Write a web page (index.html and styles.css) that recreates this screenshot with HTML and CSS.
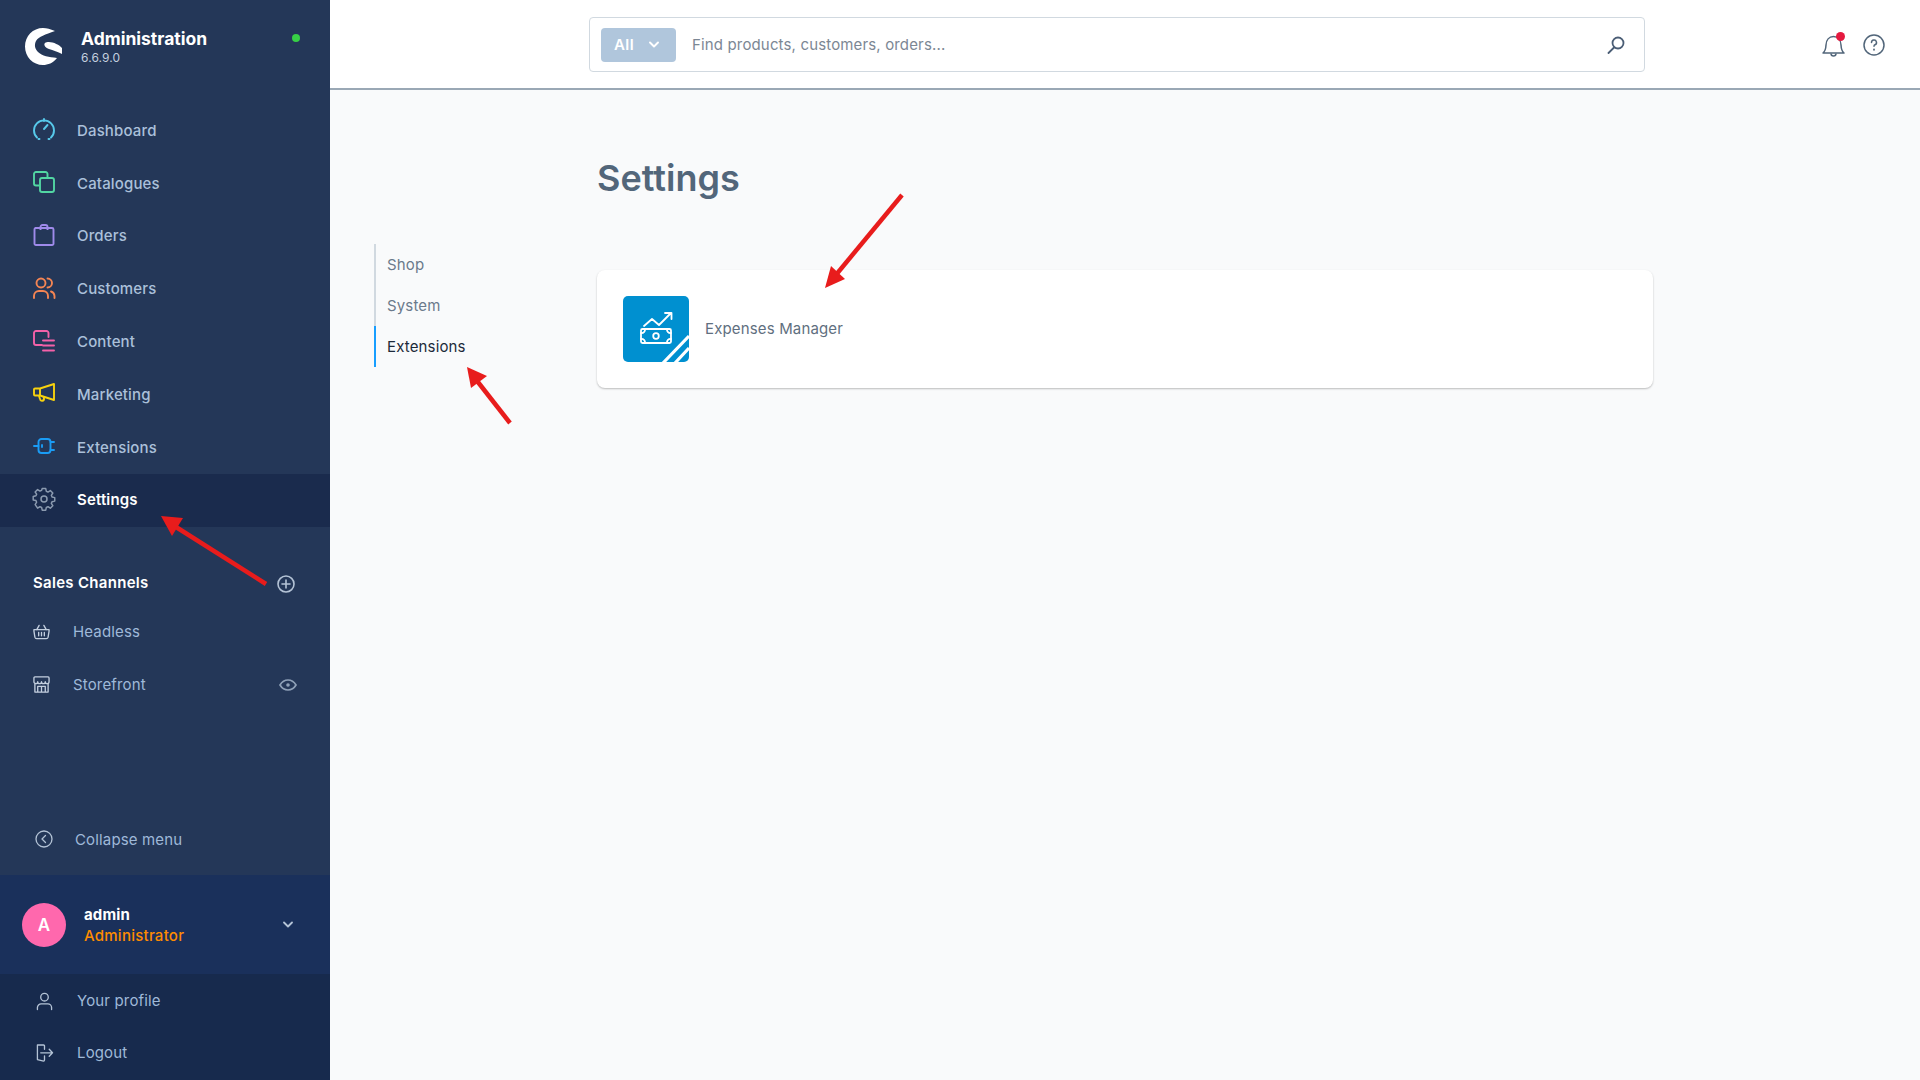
FILE: index.html
```html
<!DOCTYPE html>
<html lang="en">
<head>
<meta charset="utf-8">
<title>Settings</title>
<link rel="stylesheet" href="styles.css">
</head>
<body>
<aside class="sidebar">
  <header class="brand">
    <svg class="logo" width="37" height="37" viewBox="0 0 37 37"><path fill="#fff" fill-rule="evenodd" d="M30 3C25 1 22 0 18 0 8 0 0 8 0 18.500 0 29 8 37 18 37c5 0 10-2 14-7-8-1-15-2-19-6-3-3-4-7-2-11 3-5 9-6 19-10Z"/><path fill="#fff" d="M20 15c4-3 14 1 17 5v6c-4-2-9-4-13-5-3-1-6-4-4-6Z"/></svg>
    <div class="brand-text">
      <div class="brand-name">Administration</div>
      <div class="brand-version">6.6.9.0</div>
    </div>
    <span class="status-dot"></span>
  </header>
  <nav class="main-nav">
    <a class="nav-row"><svg class="nav-icon" viewBox="0 0 22 22" fill="none" stroke="#57c9ea" stroke-width="1.900" stroke-linecap="round"><path d="M4 19.500a10 10 0 1 1 14 0"/><path d="M11 1v2M11 11l3.500-4"/><path d="M5.500 21h1M15.500 21h1"/></svg><span>Dashboard</span></a>
    <a class="nav-row"><svg class="nav-icon" viewBox="0 0 22 22" fill="none" stroke="#52d6a3" stroke-width="1.900" stroke-linejoin="round"><path d="M14.500 6V3a2 2 0 0 0-2-2H3a2 2 0 0 0-2 2v9.500a2 2 0 0 0 2 2h3"/><rect x="7" y="7" width="14" height="14" rx="2"/></svg><span>Catalogues</span></a>
    <a class="nav-row"><svg class="nav-icon" viewBox="0 0 22 22" fill="none" stroke="#9f8aea" stroke-width="1.900" stroke-linejoin="round"><path d="M2.500 4H19a1.500 1.500 0 0 1 1.500 1.500V20a1.500 1.500 0 0 1-1.500 1H3a1.500 1.500 0 0 1-1.500-1V5.500A1.500 1.500 0 0 1 2.500 4Z"/><path d="M7.500 6V3a2 2 0 0 1 2-2h3a2 2 0 0 1 2 2v3"/></svg><span>Orders</span></a>
    <a class="nav-row"><svg class="nav-icon" viewBox="0 0 22 22" fill="none" stroke="#f58553" stroke-width="1.900" stroke-linecap="round"><circle cx="8" cy="6" r="4.500"/><path d="M1 21v-2a5 5 0 0 1 5-5h4a5 5 0 0 1 5 5v2M14.500 1.500a4.500 4.500 0 0 1 0 9M18 14.500a5 5 0 0 1 3.500 4.500v2"/></svg><span>Customers</span></a>
    <a class="nav-row"><svg class="nav-icon" viewBox="0 0 22 22" fill="none" stroke="#f461a8" stroke-width="1.900" stroke-linecap="round" stroke-linejoin="round"><path d="M15.500 7V3a2 2 0 0 0-2-2H3a2 2 0 0 0-2 2v10a2 2 0 0 0 2 2h6"/><path d="M10 10.500h11M10 15.500h11M10 20.500h11"/></svg><span>Content</span></a>
    <a class="nav-row"><svg class="nav-icon" viewBox="0 0 22 22" fill="none" stroke="#f8d20e" stroke-width="1.900" stroke-linejoin="round"><path d="M21 2 7 6.500H2a1 1 0 0 0-1 1v5a1 1 0 0 0 1 1h5L21 18Z"/><path d="M7 6.500v7M6 14l1 3a2 2 0 0 0 4-.5l-.5-1.500"/></svg><span>Marketing</span></a>
    <a class="nav-row"><svg class="nav-icon" viewBox="0 0 22 22" fill="none" stroke="#1a9cf5" stroke-width="1.900" stroke-linecap="round"><rect x="5.500" y="4" width="12" height="14" rx="3"/><path d="M1 11h4.500M17.500 7H21M17.500 15H21"/><path d="M9 10v2"/></svg><span>Extensions</span></a>
    <a class="nav-row is-active"><svg class="nav-icon" viewBox="0 0 22 22" fill="none" stroke="#8c9bb0" stroke-width="1.500" stroke-linejoin="round"><circle cx="11" cy="11" r="3"/><path d="M9.200 1h3.600l.6 2.800 1.700.7 2.400-1.500 2.500 2.500-1.500 2.400.7 1.700 2.800.6v3.600l-2.800.6-.7 1.700 1.500 2.400-2.500 2.500-2.400-1.500-1.700.7-.6 2.800H9.200l-.6-2.800-1.700-.7-2.400 1.500L2 17.300l1.500-2.400-.7-1.700L0 12.600V9l2.800-.6.7-1.700L2 4.500 4.500 2l2.400 1.500 1.700-.7Z" transform="translate(.2 -.4) scale(.98)"/></svg><span>Settings</span></a>
  </nav>
  <section class="channels">
    <div class="channels-head">
      <span>Sales Channels</span>
      <svg class="side-action" width="18" height="18" viewBox="0 0 18 18" fill="none" stroke="#b4c3d6" stroke-width="1.600" stroke-linecap="round"><circle cx="9" cy="9" r="8"/><path d="M9 5v8M5 9h8"/></svg>
    </div>
    <a class="channel-row"><svg class="channel-icon" viewBox="0 0 18 18" fill="none" stroke="#c3cfdf" stroke-width="1.400" stroke-linejoin="round" stroke-linecap="round"><path d="M1 7h16v1.500l-1 6.500a2 2 0 0 1-2 1.500H4a2 2 0 0 1-2-1.500L1 8.500Z"/><path d="M4 7l2.500-4.500M14 7l-2.500-4.500M6 10v3.500M9 10v3.500M12 10v3.500"/></svg><span>Headless</span></a>
    <a class="channel-row"><svg class="channel-icon" viewBox="0 0 18 18" fill="none" stroke="#c3cfdf" stroke-width="1.400" stroke-linejoin="round"><path d="M2 1h14a1 1 0 0 1 1 1v4a2 2 0 0 1-4 0 2 2 0 0 1-4 0 2 2 0 0 1-4 0 2 2 0 0 1-4 0V2a1 1 0 0 1 1-1ZM2 8v9h14V8M5 17v-6h8v6M9 11v6"/></svg><span>Storefront</span><svg class="eye" width="18" height="12" viewBox="0 0 18 12" fill="none" stroke="#8fa1b8" stroke-width="1.700"><path d="M1 6c2-3.300 4.800-5 8-5s6 1.700 8 5c-2 3.300-4.800 5-8 5S3 9.300 1 6Z"/><circle cx="9" cy="6" r="1.800" fill="#8fa1b8" stroke="none"/></svg></a>
  </section>
  <a class="collapse-row"><svg width="18" height="18" viewBox="0 0 18 18" fill="none" stroke="#b4c3d6" stroke-width="1.300" stroke-linecap="round" stroke-linejoin="round"><circle cx="9" cy="9" r="8"/><path d="M10.500 5.500 7 9l3.500 3.500"/></svg><span>Collapse menu</span></a>
  <div class="user-block">
    <span class="avatar">A</span>
    <div class="user-text">
      <div class="user-name">admin</div>
      <div class="user-role">Administrator</div>
    </div>
    <svg class="user-chevron" width="10" height="7" viewBox="0 0 10 7" fill="none" stroke="#b4c3d6" stroke-width="1.800" stroke-linecap="round" stroke-linejoin="round"><path d="m1 1.500 4 4 4-4"/></svg>
  </div>
  <div class="user-menu">
    <a class="user-menu-row"><svg class="menu-icon" viewBox="0 0 18 18" fill="none" stroke="#b4c3d6" stroke-width="1.400" stroke-linecap="round"><circle cx="9" cy="5" r="4"/><path d="M1.500 18v-2a4 4 0 0 1 4-4h7a4 4 0 0 1 4 4v2"/></svg><span>Your profile</span></a>
    <a class="user-menu-row"><svg class="menu-icon" viewBox="0 0 18 18" fill="none" stroke="#b4c3d6" stroke-width="1.400" stroke-linecap="round" stroke-linejoin="round"><path d="M9 5V1.500a1 1 0 0 0-1-1H1.500v15.500l6.500 1.500a1 1 0 0 0 1-1V12M5 8.800h12.500M14 5l3.500 3.800-3.500 3.700"/></svg><span>Logout</span></a>
  </div>
</aside>
<main class="main">
  <header class="topbar">
    <div class="search">
      <span class="search-type">All<svg width="10" height="7" viewBox="0 0 10 7" fill="none" stroke="#fff" stroke-width="1.900" stroke-linecap="round" stroke-linejoin="round"><path d="m1 1.500 4 4 4-4"/></svg></span>
      <span class="search-input">Find products, customers, orders...</span>
      <svg width="18" height="18" viewBox="0 0 18 18" fill="none" stroke="#4a5d75" stroke-width="1.800" stroke-linecap="round"><circle cx="11" cy="7" r="5.500"/><path d="M7 11.500 1.500 17"/></svg>
    </div>
    <div class="top-actions">
      <span class="bell"><svg width="23" height="24" viewBox="0 0 23 24" fill="none" stroke="#52667a" stroke-width="1.500" stroke-linejoin="round"><path d="M1 20c2.500-2 2.800-4 3-8 .2-5 3-8.500 7.500-8.500s7.300 3.500 7.500 8.500c.2 4 .5 6 3 8Z"/><path d="M9 20.500a2.500 2.500 0 0 0 5 0"/></svg><span class="bell-dot"></span></span>
      <svg width="22" height="22" viewBox="0 0 22 22" fill="none" stroke="#52667a" stroke-width="1.500" stroke-linecap="round"><circle cx="11" cy="11" r="10"/><path d="M8.500 8.500a2.500 2.500 0 1 1 3.500 2.300c-.7.300-1 .7-1 1.500"/><path d="M11 15.500v.3" stroke-width="1.800"/></svg>
    </div>
  </header>
  <div class="page">
    <nav class="settings-nav">
      <a class="settings-tab">Shop</a>
      <a class="settings-tab">System</a>
      <a class="settings-tab is-active">Extensions</a>
    </nav>
    <section class="settings-body">
      <h1>Settings</h1>
      <div class="card">
        <svg class="card-icon" width="66" height="66" viewBox="0 0 66 66"><rect width="66" height="66" rx="5" fill="#0090d0"/><path d="M40 67 66 40M52 67 66 52" fill="none" stroke="#fff" stroke-width="3.200"/><g fill="none" stroke="#fff" stroke-width="1.800" stroke-linecap="round" stroke-linejoin="round"><path d="m21 30 8-7 7 6 12-12M42 17h6.500v6"/><rect x="18" y="33" width="30" height="14" rx="1.500"/><circle cx="33" cy="40" r="2.800"/><path d="M18 37a3.500 3.500 0 0 0 4-4M48 37a3.500 3.500 0 0 1-4-4M18 43a3.500 3.500 0 0 1 4 4M48 43a3.500 3.500 0 0 0-4 4"/></g></svg>
        <span class="card-label">Expenses Manager</span>
      </div>
    </section>
  </div>
</main>
<svg class="annotations" width="1920" height="1080" viewBox="0 0 1920 1080" aria-hidden="true">
  <g stroke="#e81c1c" stroke-width="4.500" fill="#e81c1c">
    <path d="M266 584 176 527" fill="none"/>
    <path d="M161 516 183 518 172 536Z" stroke="none"/>
    <path d="M510 423 474 377" fill="none"/>
    <path d="M467 367 487 376 471 388Z" stroke="none"/>
    <path d="M902 195 835 276" fill="none"/>
    <path d="M825 288 831 266 845 279Z" stroke="none"/>
  </g>
</svg>
</body>
</html>
```
FILE: styles.css
```css
* { box-sizing: border-box; }
html, body { height: 100%; }
body {
  margin: 0;
  display: flex;
  height: 100vh;
  overflow: hidden;
  background: #f9fafb;
  font-family: Inter, "Noto Sans", sans-serif;
  font-size: 15px;
  letter-spacing: .15px;
  color: #52667a;
}
a { color: inherit; text-decoration: none; }

.sidebar {
  width: 330px;
  flex: none;
  display: flex;
  flex-direction: column;
  height: 100%;
  background: #243758;
  color: #abc0da;
}
.brand {
  height: 104.500px;
  flex: none;
  display: flex;
  align-items: flex-start;
  padding: 28px 30px 0 25px;
}
.logo { flex: none; }
.brand-text { margin-left: 19px; flex: 1; }
.brand-name { color: #fff; font-weight: 700; font-size: 17.500px; line-height: 22px; letter-spacing: 0; }
.brand-version { color: #c3cfdf; font-size: 12px; line-height: 14px; margin-top: 1px; letter-spacing: .1px; }
.status-dot { width: 8px; height: 8px; margin-top: 6px; border-radius: 50%; background: #37d046; }

.nav-row {
  display: flex;
  align-items: center;
  height: 52.800px;
  padding: 0 0 1px 33px;
  font-weight: 500;
}
.nav-icon { width: 22px; height: 22px; margin: 0 22px 2px 0; flex: none; overflow: visible; }
.nav-row.is-active { background: #1a2b4d; color: #fff; font-weight: 600; }

.channels { padding-top: 44px; }
.channels-head {
  display: flex;
  align-items: center;
  justify-content: space-between;
  height: 24px;
  padding: 0 35px 0 33px;
  color: #fff;
  font-weight: 600;
  letter-spacing: .3px;
}
.side-action { margin-top: 2px; }
.channel-row {
  display: flex;
  align-items: center;
  height: 53px;
  padding: 0 33px;
  color: #9fb9d8;
}
.channels-head + .channel-row { margin-top: 10px; }
.channel-icon { width: 17px; height: 17px; margin-right: 23px; flex: none; }
.eye { margin-left: auto; margin-top: 2px; }

.collapse-row {
  margin-top: auto;
  height: 54px;
  flex: none;
  display: flex;
  align-items: center;
  padding: 0 35px 18px;
  color: #9fb9d8;
}
.collapse-row span { margin-left: 22px; }
.user-block {
  height: 99px;
  flex: none;
  display: flex;
  align-items: center;
  padding-left: 22px;
  background: #1a305b;
}
.avatar {
  width: 44px;
  height: 44px;
  flex: none;
  border-radius: 50%;
  background: #ff68ad;
  color: #fff;
  font-weight: 600;
  font-size: 17px;
  display: flex;
  align-items: center;
  justify-content: center;
}
.user-text { margin-left: 18px; flex: 1; }
.user-name { color: #fff; font-weight: 700; line-height: 21px; }
.user-role { color: #ff8c00; font-weight: 500; line-height: 21px; letter-spacing: .25px; }
.user-chevron { margin-right: 37px; }
.user-menu { background: #172a4d; height: 106px; flex: none; }
.user-menu-row {
  display: flex;
  align-items: center;
  height: 53px;
  padding-left: 36px;
  color: #9fb9d8;
}
.user-menu-row:last-child { padding-bottom: 2px; }
.menu-icon { width: 17px; height: 18px; margin-right: 24px; flex: none; overflow: visible; }

.main { flex: 1; min-width: 0; display: flex; flex-direction: column; }
.topbar {
  height: 90px;
  flex: none;
  display: flex;
  align-items: flex-start;
  padding: 17px 35px 0 259px;
  background: #fff;
  border-bottom: 2px solid #9aa8b5;
}
.search {
  width: 1056px;
  height: 55px;
  display: flex;
  align-items: center;
  padding: 0 19px 0 11px;
  border: 1px solid #d1d9e0;
  border-radius: 4px;
  background: #fff;
}
.search-type {
  width: 75px;
  height: 34px;
  flex: none;
  display: flex;
  align-items: center;
  gap: 15px;
  padding-left: 13px;
  background: #b0c6dc;
  border-radius: 4px;
  color: #fff;
  font-weight: 600;
  letter-spacing: .4px;
}
.search-input { flex: 1; margin-left: 16px; color: #7c8794; letter-spacing: .15px; }
.top-actions { margin-left: auto; display: flex; align-items: center; gap: 18px; padding-top: 16px; }
.bell { position: relative; display: flex; }
.bell-dot { position: absolute; top: -1px; right: 0; width: 9px; height: 9px; border-radius: 50%; background: #e5193f; }

.page { flex: 1; display: flex; padding-left: 44px; }
.settings-nav {
  width: 223px;
  flex: none;
  margin-top: 154px;
  align-self: flex-start;
}
.settings-tab {
  display: block;
  height: 41px;
  line-height: 41px;
  padding-left: 11px;
  border-left: 2px solid #d1d9e0;
  color: #6b7a8c;
}
.settings-tab.is-active { border-left-color: #189eff; color: #1c2a3a; }
.settings-body { width: 1056px; padding-top: 66px; }
h1 {
  margin: 0 0 70px;
  font-size: 36px;
  line-height: 44px;
  font-weight: 600;
  letter-spacing: 0;
  color: #52667a;
}
.card {
  display: flex;
  align-items: center;
  height: 118px;
  padding-left: 26px;
  background: #fff;
  border-radius: 8px;
  box-shadow: 0 1px 2px rgba(0, 0, 0, .25);
  color: #5f6f80;
}
.card-icon { margin-right: 16px; }
.card-label { padding-bottom: 1px; }
.annotations { position: absolute; left: 0; top: 0; pointer-events: none; }
```
